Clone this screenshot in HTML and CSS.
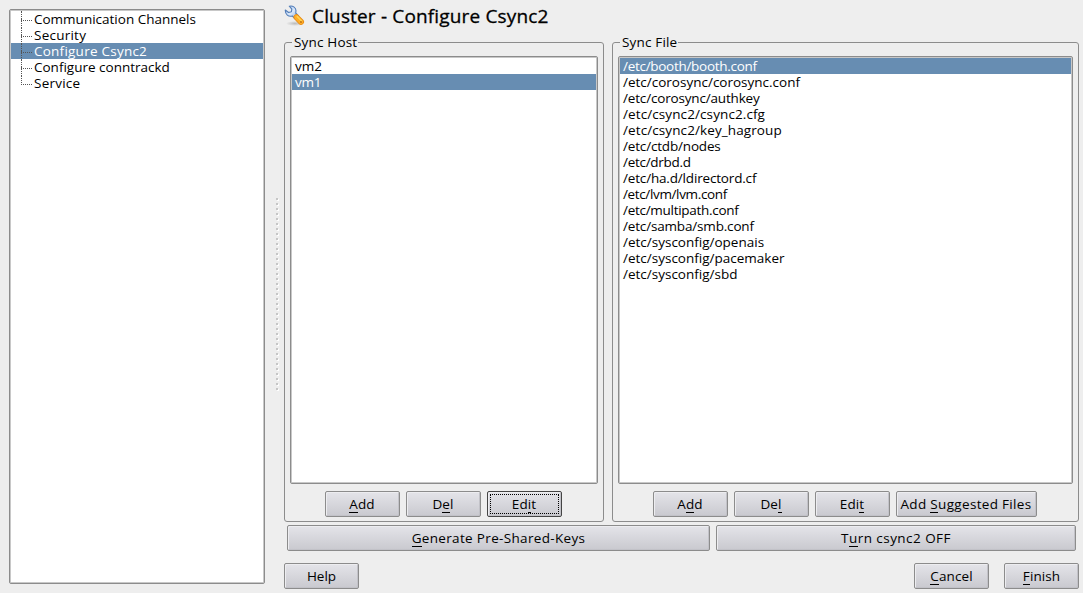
FILE: index.html
```html
<!DOCTYPE html>
<html lang="en">
<head>
<meta charset="utf-8">
<title>Cluster - Configure Csync2</title>
<link rel="stylesheet" href="styles.css">
</head>
<body>
<div class="window">
  <nav class="tree box">
    <ul class="rows">
      <li class="node"><span>Communication Channels</span></li>
      <li class="node wider"><span>Security</span></li>
      <li class="node selected wider"><span>Configure Csync2</span></li>
      <li class="node"><span>Configure conntrackd</span></li>
      <li class="node last wider"><span>Service</span></li>
    </ul>
  </nav>
  <div class="splitter"><svg width="4" height="194" viewBox="0 0 4 194" shape-rendering="crispEdges">
    <defs><pattern id="grip" width="4" height="5" patternUnits="userSpaceOnUse"><rect x="1" y="1" width="2" height="2" fill="#fff"/><rect width="2" height="2" fill="#c6c6c6"/></pattern></defs>
    <rect width="4" height="194" fill="url(#grip)"/></svg></div>
  <main class="main">
    <header class="header">
      <svg class="wrench" width="22" height="22" viewBox="0 0 22 22">
        <defs>
          <linearGradient id="steel" x1="0" y1="0" x2="1" y2="1"><stop offset="0" stop-color="#a9c6ee"/><stop offset=".5" stop-color="#d8e7fa"/><stop offset="1" stop-color="#82a9dc"/></linearGradient>
          <radialGradient id="shade"><stop offset="0" stop-color="#999" stop-opacity=".6"/><stop offset="1" stop-color="#999" stop-opacity="0"/></radialGradient>
        </defs>
        <ellipse cx="11" cy="18.5" rx="9" ry="2.5" fill="url(#shade)"/>
        <path d="M5.3 1.2 C8.5.3 12 2.3 12 5.8 L11.7 8 14.5 10.8 11.2 13.8 8.3 11 C4.5 12 1 9.5 1.3 5 L4.6 7.5 7.4 6.7 7.8 4.1Z" fill="url(#steel)" stroke="#527db8" stroke-width="1.1" stroke-linejoin="round"/>
        <path d="M12.5 12.2 L17 16.9" stroke="#e78b14" stroke-width="6" stroke-linecap="round"/>
        <path d="M12.5 12.2 L17 16.9" stroke="#ffad27" stroke-width="4.4" stroke-linecap="round"/>
        <path d="M13.2 11.5 L17.6 16" stroke="#ffd552" stroke-width="1.4" stroke-linecap="round"/>
        <circle cx="17" cy="17" r=".9" fill="#b96c12"/>
      </svg>
      <h1 class="title"><span>Cluster - Configure Csync2</span></h1>
    </header>
    <div class="groups">
      <section class="group hosts">
        <h2 class="legend"><span>Sync Host</span></h2>
        <ul class="box list rows">
          <li><span>vm2</span></li>
          <li class="selected tight"><span>vm1</span></li>
        </ul>
        <div class="buttons">
          <button class="btn"><span><u>A</u>dd</span></button>
          <button class="btn"><span>D<u>e</u>l</span></button>
          <button class="btn focused"><span>Ed<u>i</u>t</span></button>
        </div>
      </section>
      <section class="group files">
        <h2 class="legend"><span>Sync File</span></h2>
        <ul class="box list rows">
          <li class="selected tight"><span>/etc/booth/booth.conf</span></li>
          <li><span>/etc/corosync/corosync.conf</span></li>
          <li class="snug"><span>/etc/corosync/authkey</span></li>
          <li class="loose"><span>/etc/csync2/csync2.cfg</span></li>
          <li class="loose"><span>/etc/csync2/key_hagroup</span></li>
          <li class="snug"><span>/etc/ctdb/nodes</span></li>
          <li class="tight"><span>/etc/drbd.d</span></li>
          <li class="snug"><span>/etc/ha.d/ldirectord.cf</span></li>
          <li class="tighter"><span>/etc/lvm/lvm.conf</span></li>
          <li class="tight"><span>/etc/multipath.conf</span></li>
          <li class="snug"><span>/etc/samba/smb.conf</span></li>
          <li><span>/etc/sysconfig/openais</span></li>
          <li><span>/etc/sysconfig/pacemaker</span></li>
          <li><span>/etc/sysconfig/sbd</span></li>
        </ul>
        <div class="buttons">
          <button class="btn"><span>A<u>d</u>d</span></button>
          <button class="btn"><span>De<u>l</u></span></button>
          <button class="btn"><span>Edi<u>t</u></span></button>
          <button class="btn suggest"><span>Add <u>S</u>uggested Files</span></button>
        </div>
      </section>
    </div>
    <div class="wide">
      <button class="btn generate"><span><u>G</u>enerate Pre-Shared-Keys</span></button>
      <button class="btn toggle"><span>T<u>u</u>rn csync2 OFF</span></button>
    </div>
    <footer class="footer">
      <button class="btn help"><span>Help</span></button>
      <button class="btn"><span><u>C</u>ancel</span></button>
      <button class="btn"><span><u>F</u>inish</span></button>
    </footer>
  </main>
</div>
</body>
</html>
```
FILE: styles.css
```css
* { box-sizing: border-box; }
body {
  margin: 0;
  background: #eee;
  color: #000;
  font: 13.5px/16px "Open Sans", "Noto Sans", sans-serif;
  overflow: hidden;
}
.window { display: flex; width: 1083px; height: 593px; padding: 9px 4px 4px 9px; }
.box {
  background: #fff;
  border: 1px solid #8c8c8c;
  border-radius: 2px;
  box-shadow: inset 0 0 0 1px #c8c8c8;
  padding: 1px;
}
.rows, .rows li { list-style: none; }
.rows li { height: 16px; white-space: nowrap; }
.selected { background: #678db2; color: #fff; }
.wider { letter-spacing: .24px; }
.loose { letter-spacing: .1px; }
.snug { letter-spacing: -.17px; }
.tight { letter-spacing: -.29px; }
.tighter { letter-spacing: -.36px; }
.tree { width: 256px; height: 575px; }
.tree .rows { margin: 0; padding: 0; }
.node { display: flex; padding-left: 10px; }
.node::before {
  content: "";
  width: 10px;
  height: 9px;
  margin-right: 2px;
  border-left: 1px dotted #555;
  border-bottom: 1px dotted #555;
}
.node:not(.last) {
  background-image: repeating-linear-gradient(#555 0 1px, transparent 1px 2px);
  background-size: 1px 8px;
  background-position: 10px 8px;
  background-repeat: no-repeat;
}
.splitter { width: 19px; padding: 189px 0 0 11px; line-height: 0; }
.main { width: 795px; }
.header { display: flex; height: 33px; margin-top: -5px; }
.title {
  margin: 0 0 0 6px;
  font-size: 19px;
  line-height: 24px;
  font-weight: 400;
  letter-spacing: .16px;
  white-space: nowrap;
  -webkit-text-stroke: .3px #000;
}
.wrench { margin-top: 1px; }
.groups { display: flex; gap: 8px; padding-top: 5px; }
.group { height: 480px; border: 1px solid #8c8c8c; border-radius: 3px; padding: 0 5px; }
.hosts { width: 320px; }
.files { width: 467px; }
.legend {
  width: max-content;
  height: 16px;
  margin: -9px 0 6px 2px;
  padding: 0 1px 0 2px;
  background: #eee;
  font-size: inherit;
  font-weight: 400;
  letter-spacing: .17px;
  line-height: 16px;
}
.list { height: 428px; margin: 0; padding: 1px; }
.list li { padding-left: 3px; }
.buttons { display: flex; justify-content: center; gap: 6px; margin: 7px 2px 0 0; }
.btn {
  flex: none;
  width: 75px;
  height: 26px;
  padding: 0;
  border: 1px solid #8c8c8c;
  border-radius: 2px;
  background: linear-gradient(#e4e4e9, #c9c9cf);
  box-shadow: inset 1px 1px 0 #ededf0, inset -1px -1px 0 #c2c2c8;
  color: #000;
  font: inherit;
  letter-spacing: .1px;
  white-space: nowrap;
}
.btn u { text-decoration: none; box-shadow: 0 1px #000; display: inline-block; height: 16px; }
.focused { border-color: #444; outline: 1px dotted #000; outline-offset: -4px; }
.suggest { width: 141px; letter-spacing: .32px; }
.wide { display: flex; gap: 6px; padding: 3px 3px 0; }
.generate { width: 423px; letter-spacing: .33px; }
.toggle { width: 360px; letter-spacing: .45px; }
.footer { display: flex; gap: 15px; padding-top: 12px; }
.help { margin-right: auto; letter-spacing: 0; }
```
